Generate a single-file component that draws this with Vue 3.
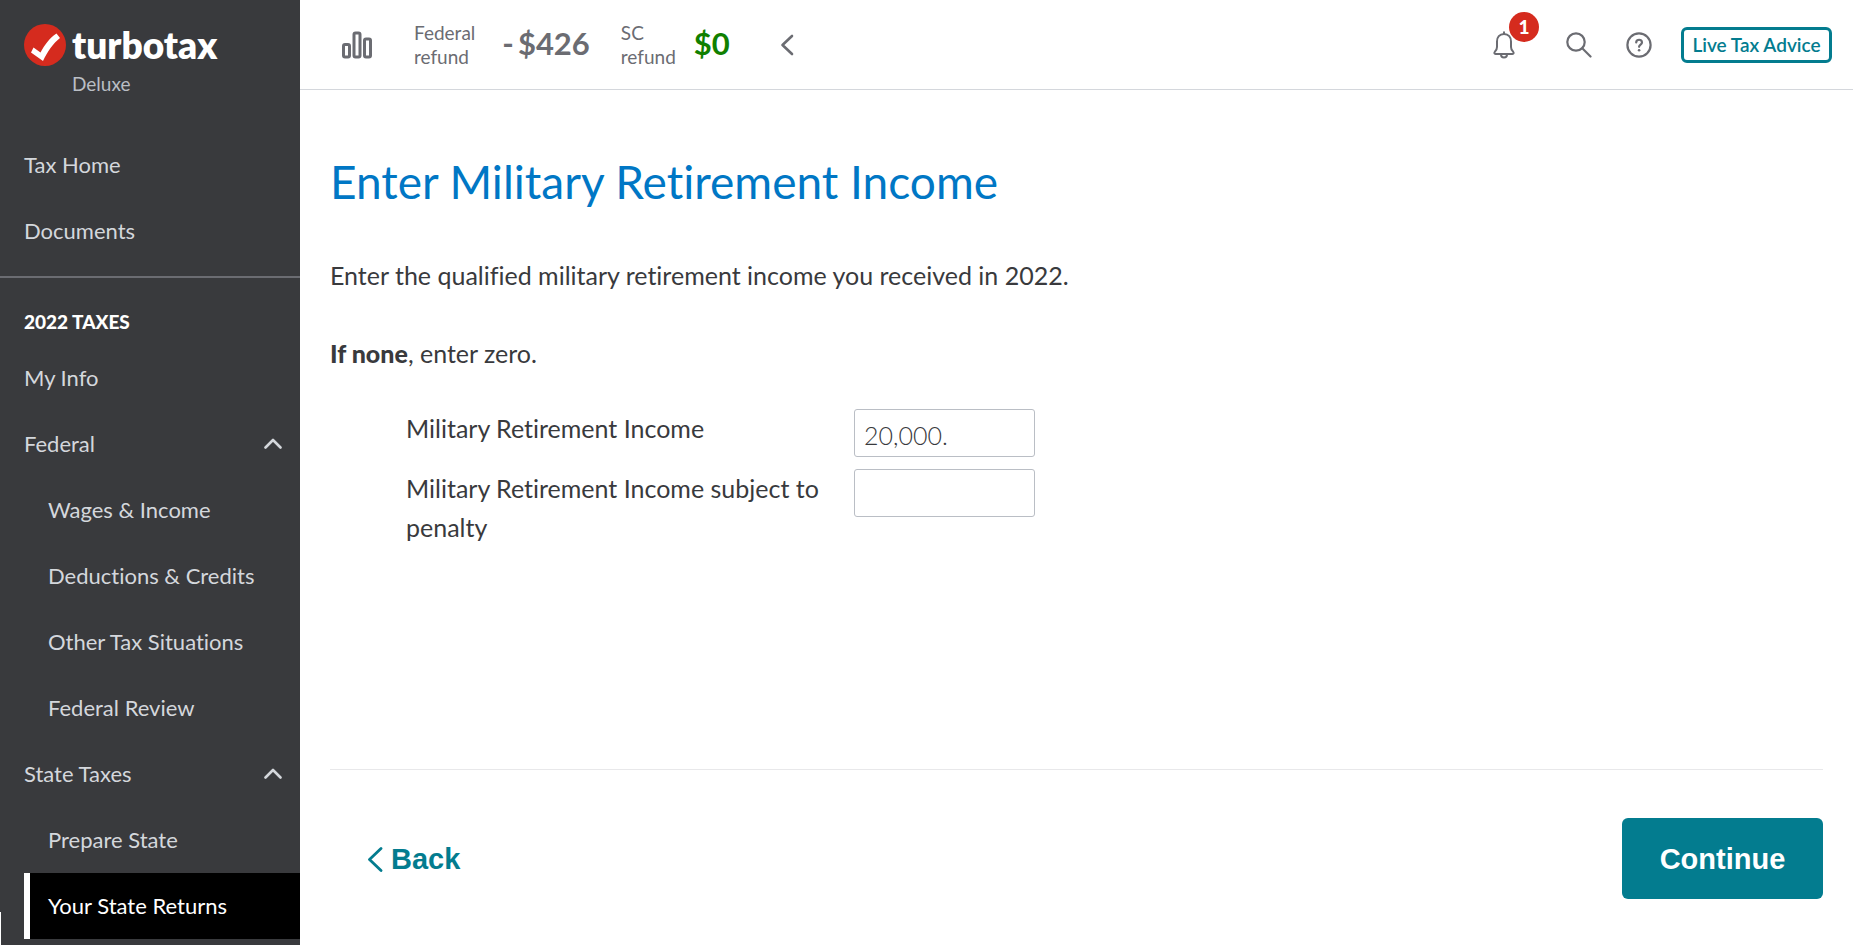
<script setup>
import { ref } from 'vue'

const income = ref('20,000.')
const penalty = ref('')

const topLinks = ['Tax Home', 'Documents']
const taxLinks = [
  { label: 'My Info' },
  { label: 'Federal', group: true },
  { label: 'Wages & Income', sub: true },
  { label: 'Deductions & Credits', sub: true },
  { label: 'Other Tax Situations', sub: true },
  { label: 'Federal Review', sub: true },
  { label: 'State Taxes', group: true },
  { label: 'Prepare State', sub: true },
  { label: 'Your State Returns', sub: true, active: true }
]
</script>

<template>
  <div class="page">
    <aside class="sidebar">
      <div class="brand">
        <svg class="brand-mark" viewBox="0 0 42 42" aria-hidden="true">
          <circle cx="21" cy="21" r="21" fill="#d52b1e" />
          <path d="M7 28.500 L9.500 23.500 L16.500 28.500 C20.500 21 25.500 14 32.500 9.500 L36 14 C29 19.500 23.500 27.500 19 37 Z" fill="#fff" />
        </svg>
        <div class="brand-text">
          <span class="brand-name">turbotax</span>
          <span class="brand-tier">Deluxe</span>
        </div>
      </div>
      <nav class="nav nav-top" aria-label="Main">
        <a v-for="l in topLinks" :key="l" href="#" class="nav-link">{{ l }}</a>
      </nav>
      <nav class="nav nav-taxes" aria-label="2022 taxes">
        <h2 class="nav-heading">2022 TAXES</h2>
        <a
          v-for="l in taxLinks"
          :key="l.label"
          href="#"
          class="nav-link"
          :class="{ sub: l.sub, active: l.active }"
        >
          <span>{{ l.label }}</span>
          <svg v-if="l.group" class="caret" viewBox="0 0 18 11" aria-hidden="true">
            <path d="M1.500 9.500 L9 2 L16.500 9.500" fill="none" stroke="#d4d7dc" stroke-width="2.600" stroke-linecap="round" stroke-linejoin="round" />
          </svg>
        </a>
      </nav>
    </aside>

    <div class="content">
      <header class="topbar">
        <svg class="bars" viewBox="0 0 30 28" fill="none" stroke="#6b6c72" stroke-width="3" aria-hidden="true">
          <rect x="1.500" y="13.500" width="6" height="12.500" rx="1.500" />
          <rect x="12" y="2" width="6" height="24" rx="1.500" />
          <rect x="22.500" y="8" width="6" height="18" rx="1.500" />
        </svg>
        <div class="refund federal">
          <span class="refund-label">Federal<br />refund</span>
          <span class="amount"><span>-</span><span>$426</span></span>
        </div>
        <div class="refund state">
          <span class="refund-label">SC<br />refund</span>
          <span class="amount positive">$0</span>
        </div>
        <button class="icon-btn collapse" type="button" aria-label="Collapse refunds">
          <svg viewBox="0 0 14 22" width="14" height="22" fill="none" stroke="#6b6c72" stroke-width="2.600" stroke-linecap="round" stroke-linejoin="round">
            <path d="M12 2 L2.500 11 L12 20" />
          </svg>
        </button>
        <div class="tools">
          <button class="icon-btn bell" type="button" aria-label="Notifications">
            <svg viewBox="0 0 22 28" width="22" height="28" fill="none" stroke="#6b6c72" stroke-width="2" stroke-linejoin="round" stroke-linecap="round">
              <path d="M11 1.200 V3" />
              <path d="M11 3 C6.500 3 4 6.300 4 10.500 V16 C4 18.500 3.300 19.500 1.800 20.800 C1 21.700 1.300 23 2.500 23 H19.500 C20.700 23 21 21.700 20.200 20.800 C18.700 19.500 18 18.500 18 16 V10.500 C18 6.300 15.500 3 11 3 Z" />
              <path d="M8 23.500 C8 27.600 14 27.600 14 23.500" />
            </svg>
            <span class="badge">1</span>
          </button>
          <button class="icon-btn search" type="button" aria-label="Search">
            <svg viewBox="0 0 26 26" width="26" height="26" fill="none" stroke="#6b6c72" stroke-width="2.200" stroke-linecap="round">
              <circle cx="10" cy="10" r="8.700" />
              <path d="M16.500 16.500 L24.500 24.500" />
            </svg>
          </button>
          <button class="icon-btn" type="button" aria-label="Help">
            <svg viewBox="0 0 26 26" width="26" height="26" fill="none" stroke="#6b6c72" stroke-width="2.200" stroke-linecap="round">
              <circle cx="13" cy="13" r="11.600" />
              <path d="M10.200 10.500 C10.200 6.800 16 6.900 16 10.400 C16 12.600 13.100 12.500 13.100 14.800" stroke-width="2.200" />
              <circle cx="13.100" cy="18.200" r="1.300" fill="#6b6c72" stroke="none" />
            </svg>
          </button>
          <button class="advice" type="button">Live Tax Advice</button>
        </div>
      </header>

      <main class="main">
        <h1 class="title">Enter Military Retirement Income</h1>
        <p class="lead">Enter the qualified military retirement income you received in 2022.</p>
        <p class="lead note"><b>If none</b>, enter zero.</p>
        <form class="form" @submit.prevent>
          <label class="field-label" for="income">Military Retirement Income</label>
          <input id="income" v-model="income" class="field" type="text" />
          <label class="field-label" for="penalty">Military Retirement Income subject to penalty</label>
          <input id="penalty" v-model="penalty" class="field" type="text" />
        </form>
        <footer class="actions">
          <button class="back" type="button">
            <svg viewBox="0 0 16 26" width="16" height="26" fill="none" stroke="#037c8f" stroke-width="2.800" stroke-linecap="round" stroke-linejoin="round" aria-hidden="true">
              <path d="M14 2.500 L2.500 13.500 L14 24.500" />
            </svg>
            Back
          </button>
          <button class="continue" type="button">Continue</button>
        </footer>
      </main>
    </div>
  </div>
</template>

<style>
body {
  margin: 0;
  background: #fff;
}
</style>

<style scoped>
.page {
  display: flex;
  min-height: 100vh;
  font-family: Lato, "Liberation Sans", sans-serif;
  font-variant-ligatures: none;
  color: #393a3d;
}
.page *,
.page *::before {
  box-sizing: border-box;
}
button {
  font-family: inherit;
  border: 0;
  background: none;
  padding: 0;
  cursor: pointer;
}

.sidebar {
  position: relative;
  flex: 0 0 300px;
  background: #393a3d;
}
.sidebar::before {
  content: "";
  position: absolute;
  left: 0;
  bottom: 0;
  width: 1px;
  height: 33px;
  background: #fff;
}
.brand {
  display: flex;
  gap: 6px;
  height: 132px;
  padding: 24px 0 0 24px;
}
.brand-mark {
  width: 42px;
  height: 42px;
}
.brand-text {
  display: flex;
  flex-direction: column;
}
.brand-name {
  font-size: 37px;
  line-height: 42px;
  font-weight: 800;
  color: #fff;
}
.brand-tier {
  font-size: 19px;
  line-height: 36px;
  color: #babec5;
}
.nav-top {
  padding-bottom: 12px;
  border-bottom: 2px solid #6b6c72;
}
.nav-heading {
  margin: 0;
  padding: 26px 0 5px 24px;
  font-size: 19px;
  line-height: 36px;
  font-weight: 900;
  color: #fff;
}
.nav-link {
  display: flex;
  align-items: center;
  justify-content: space-between;
  height: 66px;
  padding: 0 18px 2px 24px;
  font-size: 22px;
  color: #d4d7dc;
  text-decoration: none;
}
.nav-link.sub {
  padding-left: 48px;
}
.nav-link.active {
  margin-left: 24px;
  padding-left: 18px;
  border-left: 6px solid #fff;
  background: #000;
  color: #fff;
}
.caret {
  width: 18px;
  height: 11px;
}

.content {
  flex: 1;
  min-width: 0;
  display: flex;
  flex-direction: column;
}
.topbar {
  display: flex;
  align-items: center;
  height: 90px;
  padding: 0 21px 0 42px;
  border-bottom: 1px solid #d4d7dc;
  color: #6b6c72;
}
.bars {
  width: 30px;
  height: 28px;
  margin-right: 42px;
}
.refund {
  display: flex;
  align-items: center;
}
.federal {
  gap: 27px;
  margin-right: 31px;
}
.state {
  gap: 18px;
  margin-right: 50px;
}
.refund-label {
  font-size: 19px;
  line-height: 24px;
}
.amount {
  display: flex;
  gap: 4px;
  padding-bottom: 3px;
  font-size: 31px;
  font-weight: 700;
}
.positive {
  color: #108000;
}
.icon-btn {
  display: flex;
  position: relative;
}
.tools {
  display: flex;
  align-items: center;
  gap: 29px;
  margin-left: auto;
}
.bell {
  margin-right: 22px;
}
.search {
  margin-right: 5px;
}
.badge {
  position: absolute;
  left: 16px;
  top: -19px;
  width: 30px;
  height: 30px;
  border-radius: 50%;
  background: #d52b1e;
  color: #fff;
  font-size: 19px;
  line-height: 30px;
  font-weight: 900;
  text-align: center;
}
.advice {
  width: 151px;
  height: 36px;
  border: 3px solid #037c8f;
  border-radius: 6px;
  color: #037c8f;
  font-size: 19px;
  font-weight: 600;
  white-space: nowrap;
}

.main {
  flex: 1;
  padding: 62px 30px 46px;
}
.title {
  margin: 0;
  font-size: 46px;
  line-height: 60px;
  font-weight: 400;
  color: #0077c5;
}
.lead {
  margin: 43px 0 0;
  font-size: 25px;
  line-height: 40px;
}
.note {
  margin-top: 38px;
}
.note b {
  font-weight: 900;
}
.form {
  display: grid;
  grid-template-columns: 424px 181px;
  column-gap: 24px;
  row-gap: 12px;
  align-items: start;
  margin: 36px 0 0 76px;
}
.field-label {
  font-size: 25px;
  line-height: 39px;
}
.field {
  width: 100%;
  height: 48px;
  padding: 3px 9px 0;
  border: 1px solid #babec5;
  border-radius: 3px;
  background: #fff;
  font-family: inherit;
  font-size: 25px;
  font-weight: 300;
  color: #393a3d;
}
.actions {
  display: flex;
  align-items: center;
  justify-content: space-between;
  margin-top: 222px;
  padding: 48px 0 0 37px;
  border-top: 1px solid #e8e8ea;
}
.back {
  display: flex;
  align-items: center;
  gap: 8px;
  font: 700 29px/34px "Liberation Sans", Arial, sans-serif;
  color: #037c8f;
}
.continue {
  width: 201px;
  height: 81px;
  border-radius: 6px;
  background: #037c8f;
  color: #fff;
  font: 700 29px/34px "Liberation Sans", Arial, sans-serif;
}
</style>
